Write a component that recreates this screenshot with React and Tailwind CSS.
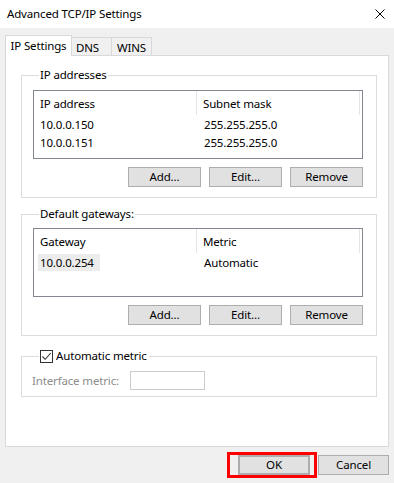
import React from "react";

const font = { fontFamily: '"Segoe UI", "Noto Sans", "Liberation Sans", sans-serif' };

function Btn({ children, className = "" }) {
  return (
    <div
      className={
        "flex items-center justify-center h-[20px] bg-[#e1e1e1] border border-[#adadad] text-black " +
        className
      }
    >
      {children}
    </div>
  );
}

function ListView({ cols, rows, selectedFirstCell }) {
  return (
    <div className="w-[330px] h-[69px] border border-[#828790] bg-white flex flex-col">
      <div className="flex h-[24px] shrink-0">
        <div className="w-[163px] flex items-center pl-[6px] pt-[2px] border-r border-[#e5e5e5]">{cols[0]}</div>
        <div className="w-[163px] flex items-center pl-[6px] pt-[2px] border-r border-[#e5e5e5]">{cols[1]}</div>
      </div>
      {rows.map((r, i) => (
        <div key={i} className="flex h-[18px] shrink-0 items-center">
          <div className="w-[164px] flex items-center h-full pl-[4px]">
            <span
              className={
                "h-[17px] flex items-center px-[2px] pt-[1px] " +
                (selectedFirstCell && i === 0 ? "bg-[#ececec] w-[62px]" : "")
              }
            >
              {r[0]}
            </span>
          </div>
          <div className="flex items-center pl-[6px] pt-[1px]">{r[1]}</div>
        </div>
      ))}
    </div>
  );
}

function Buttons() {
  return (
    <div className="flex justify-end gap-[8px] w-[330px] mt-[8px]">
      <Btn className="w-[73px]">Add...</Btn>
      <Btn className="w-[73px]">Edit...</Btn>
      <Btn className="w-[73px]">Remove</Btn>
    </div>
  );
}

export default function App() {
  return (
    <div
      className="w-[394px] h-[483px] bg-[#f0f0f0] text-[11.5px] tracking-[-0.15px] text-black leading-[16px] overflow-hidden"
      style={font}
    >
      {/* Title bar */}
      <div className="h-[28px] bg-white flex items-center justify-between pl-[7px] pr-[7px]">
        <span className="text-black">Advanced TCP/IP Settings</span>
        <svg width="10" height="10" viewBox="0 0 10 10" className="mr-[2px]">
          <path d="M0.5 0.5 L9.5 9.5 M9.5 0.5 L0.5 9.5" stroke="#000" strokeWidth="1" />
        </svg>
      </div>

      {/* Tabs */}
      <div className="flex items-end pl-[5px] pt-[7px]">
        <div className="relative z-10 -mb-px h-[21px] w-[67px] bg-white border border-b-0 border-[#d9d9d9] flex items-center justify-center pb-[1px]">
          IP Settings
        </div>
        <div className="h-[18px] w-[41px] -ml-px bg-[#f0f0f0] border border-b-0 border-[#d9d9d9] flex items-center pl-[4px] pt-[2px]">
          DNS
        </div>
        <div className="h-[18px] w-[41px] -ml-px bg-[#f0f0f0] border border-b-0 border-[#d9d9d9] flex items-center justify-center pt-[2px]">
          WINS
        </div>
      </div>

      {/* Panel */}
      <div className="mx-[5px] h-[392px] bg-white border border-[#d9d9d9] flex flex-col">
        <fieldset className="ml-[15px] mt-[11px] w-[356px] border border-[#dcdcdc] pl-[11px] pt-[7px] pb-[10px]">
          <legend className="ml-[6px] px-[1px] leading-[16px]">IP addresses</legend>
          <ListView
            cols={["IP address", "Subnet mask"]}
            rows={[
              ["10.0.0.150", "255.255.255.0"],
              ["10.0.0.151", "255.255.255.0"],
            ]}
          />
          <Buttons />
        </fieldset>

        <fieldset className="ml-[15px] mt-[8px] w-[356px] border border-[#dcdcdc] pl-[11px] pt-[6px] pb-[10px]">
          <legend className="ml-[6px] px-[1px] leading-[16px]">Default gateways:</legend>
          <ListView
            cols={["Gateway", "Metric"]}
            rows={[["10.0.0.254", "Automatic"]]}
            selectedFirstCell
          />
          <div className="mt-[1px]">
            <Buttons />
          </div>
        </fieldset>

        <fieldset className="ml-[15px] mt-[12px] w-[356px] border border-[#dcdcdc] pl-[10px] pt-[7px] pb-[6px]">
          <legend className="ml-[7px] pl-[1px] pr-[2px] leading-[16px]">
            <span className="flex items-center gap-[3px]">
              <span className="w-[13px] h-[13px] border border-[#333333] bg-white flex items-center justify-center">
                <svg width="11" height="11" viewBox="0 0 11 11">
                  <path d="M1.5 5.5 L4.2 8.3 L9.8 2" fill="none" stroke="#333333" strokeWidth="1.1" />
                </svg>
              </span>
              <span>Automatic metric</span>
            </span>
          </legend>
          <div className="flex items-center">
            <span className="text-[#8c8c8c] w-[98px]">Interface metric:</span>
            <div className="w-[75px] h-[19px] border border-[#cccccc] bg-white" />
          </div>
        </fieldset>
      </div>

      {/* Bottom buttons */}
      <div className="flex justify-end items-start pr-[5px] mt-[5px]">
        <div className="border-[3px] border-[#ff0000] pl-[8px] pr-[4px] h-[26px] flex items-center">
          <Btn className="w-[72px] border-2 border-[#0078d7]">OK</Btn>
        </div>
        <div className="pt-[3px] ml-[1px]">
          <Btn className="w-[71px]">Cancel</Btn>
        </div>
      </div>
    </div>
  );
}
